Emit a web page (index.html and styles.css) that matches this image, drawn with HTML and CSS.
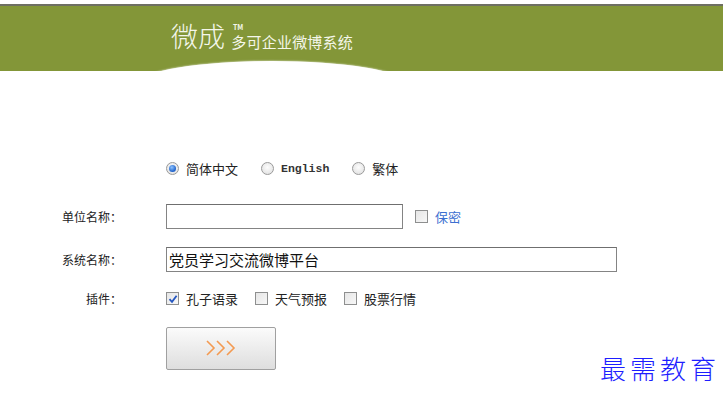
FILE: index.html
```html
<!DOCTYPE html>
<html lang="zh-CN">
<head>
    <meta charset="UTF-8">
    <meta name="viewport" content="width=device-width, initial-scale=1.0">
    <title>微成 多可企业微博系统</title>
    <link rel="stylesheet" href="styles.css">
</head>
<body>

    <div class="topbar"><span class="top-link">返回首页</span></div>

    <div class="header">
        <div class="brand">
            <span class="brand-main">微成</span>
            <span class="brand-tm">TM</span>
            <span class="brand-sub">多可企业微博系统</span>
        </div>
        <div class="arc"></div>
    </div>

    <div class="form">
        <div class="row row-lang">
            <div class="label"></div>
            <div class="control">
                <span class="opt lang"><span class="radio checked"></span>简体中文</span>
                <span class="opt lang"><span class="radio"></span><span class="en">English</span></span>
                <span class="opt lang"><span class="radio"></span>繁体</span>
            </div>
        </div>

        <div class="row row-field">
            <div class="label">单位名称：</div>
            <div class="control">
                <div class="input short"></div>
                <span class="opt secret"><span class="check"></span>保密</span>
            </div>
        </div>

        <div class="row row-field">
            <div class="label">系统名称：</div>
            <div class="control">
                <div class="input long">党员学习交流微博平台</div>
            </div>
        </div>

        <div class="row row-plugins">
            <div class="label">插件：</div>
            <div class="control">
                <span class="opt"><span class="check checked">
                    <svg width="10" height="10" viewBox="0 0 10 10"><path d="M1.5 5.2 L4 7.8 L8.6 1.8" fill="none" stroke="#2456c0" stroke-width="1.8"/></svg>
                </span>孔子语录</span>
                <span class="opt"><span class="check"></span>天气预报</span>
                <span class="opt"><span class="check"></span>股票行情</span>
            </div>
        </div>

        <div class="row row-button">
            <div class="label"></div>
            <div class="control">
                <div class="next-btn">
                    <svg width="32" height="18" viewBox="0 0 32 18">
                        <path d="M2 2 L9 9 L2 16 M12 2 L19 9 L12 16 M22 2 L29 9 L22 16" fill="none" stroke="#f39a52" stroke-width="1.6"/>
                    </svg>
                </div>
            </div>
        </div>
    </div>

    <div class="watermark">最需教育</div>

</body>
</html>
```

FILE: styles.css
```css
body {
    margin: 0;
    font-family: "Noto Sans CJK SC", "Liberation Sans", sans-serif;
    font-size: 13px;
    color: #222;
    background: #fff;
}
.topbar {
    height: 4px;
    overflow: hidden;
    border-bottom: 2px solid #6e6f62;
    text-align: right;
}
.top-link {
    display: inline-block;
    margin-top: -14px;
    margin-right: 4px;
    font-size: 13px;
    line-height: 18px;
    color: #111;
}
.header {
    position: relative;
    height: 65px;
    background: #839638;
    overflow: hidden;
}
.brand {
    display: flex;
    align-items: flex-start;
    padding: 14px 0 0 171px;
    color: #f4f6ea;
}
.brand-main {
    font-size: 27px;
    line-height: 32px;
    font-weight: 300;
}
.brand-tm {
    font-size: 7px;
    line-height: 8px;
    font-weight: bold;
    margin: 3px 0 0 8px;
}
.brand-sub {
    font-size: 15px;
    line-height: 15px;
    margin: 14px 0 0 -12px;
    letter-spacing: 0.2px;
}
.arc {
    position: absolute;
    left: 140px;
    top: 55px;
    width: 264px;
    height: 44px;
    border-radius: 50%;
    background: #fff;
    box-shadow: 0 0 2px #fff;
}
.form {
    padding-top: 88px;
}
.row {
    display: grid;
    grid-template-columns: 122px 1fr;
    column-gap: 44px;
    align-items: center;
}
.label {
    text-align: right;
    font-size: 12px;
    color: #222;
}
.control {
    display: flex;
    align-items: center;
}
.row-lang {
    height: 18px;
    margin-bottom: 26px;
}
.row-field {
    height: 26px;
    margin-bottom: 17px;
}
.row-plugins {
    height: 18px;
    margin-bottom: 19px;
}
.row-button {
    height: 44px;
}
.opt {
    display: inline-flex;
    align-items: center;
    font-size: 13px;
    margin-right: 17px;
}
.opt.lang {
    margin-right: 23px;
}
.en {
    font-family: "Liberation Mono", monospace;
    font-size: 11.5px;
    font-weight: bold;
    color: #333;
}
.radio {
    width: 11px;
    height: 11px;
    border: 1px solid #9a9a9a;
    border-radius: 50%;
    background: radial-gradient(circle at 50% 40%, #fdfdfd, #dcdcdc);
    margin-right: 7px;
    position: relative;
}
.radio.checked::after {
    content: "";
    position: absolute;
    left: 2px;
    top: 2px;
    width: 7px;
    height: 7px;
    border-radius: 50%;
    background: radial-gradient(circle at 40% 35%, #8fc4ff, #1c5fc8 70%);
}
.check {
    width: 11px;
    height: 11px;
    border: 1px solid #8e8f8f;
    background: linear-gradient(135deg, #e6e6e6, #f7f7f7);
    margin-right: 7px;
    display: inline-flex;
    align-items: center;
    justify-content: center;
}
.check svg {
    display: block;
}
.input {
    height: 23px;
    border: 1px solid #848484;
    border-top-color: #6f6f6f;
    background: #fff;
    font-size: 15px;
    line-height: 23px;
    padding-left: 2px;
    box-sizing: content-box;
    color: #111;
}
.input.short {
    width: 233px;
}
.input.long {
    width: 447px;
}
.secret {
    margin-left: 12px;
    color: #3c6fd0;
}
.next-btn {
    width: 108px;
    height: 41px;
    border: 1px solid #a0a0a0;
    border-radius: 2px;
    background: linear-gradient(#fbfbfb, #dedede);
    display: flex;
    align-items: center;
    justify-content: center;
}
.watermark {
    position: absolute;
    left: 600px;
    top: 349px;
    font-size: 26px;
    letter-spacing: 4px;
    color: #1e1eff;
    font-family: "Noto Sans CJK SC", serif;
    font-weight: 300;
}
```
